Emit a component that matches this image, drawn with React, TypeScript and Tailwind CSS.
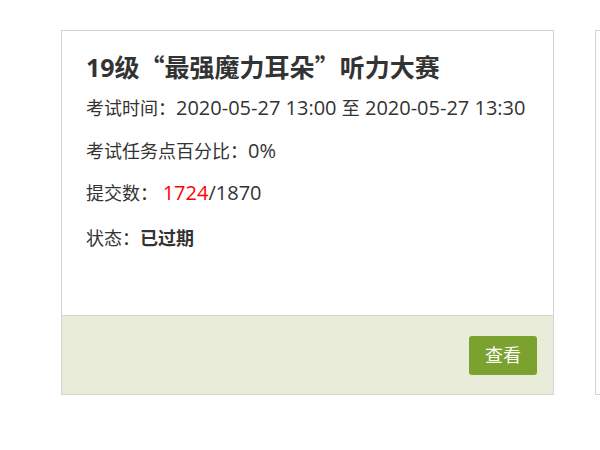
import React from "react";

export default function App() {
  const font = { fontFamily: '"Open Sans", "Noto Sans CJK SC", sans-serif' };
  const cjk = { fontFamily: '"Noto Sans CJK SC", sans-serif' };
  const L = "text-[20px]";
  return (
    <div className="w-[600px] h-[450px] bg-white overflow-hidden relative" style={font}>
      <div className="flex gap-[41px] pt-[30px] pl-[61px]">
        <div className="w-[493px] h-[365px] shrink-0 border border-[#d4d4d4] flex flex-col bg-white">
          <div className="flex-1 pl-[24px] pt-[19px] text-[#333]">
            <div className="text-[25px] font-bold leading-[32px] text-[#333] whitespace-nowrap">
              19级<span style={cjk}>“</span>最强魔力耳朵<span style={cjk}>”</span>听力大赛
            </div>
            <div className="text-[18px] leading-[24px] mt-[13px] whitespace-pre">
              考试时间：<span className={L}>2020-05-27 13:00 </span>至<span className={L}> 2020-05-27 13:30</span>
            </div>
            <div className="text-[18px] leading-[24px] mt-[19px]">
              考试任务点百分比：<span className={L}>0%</span>
            </div>
            <div className="text-[18px] leading-[24px] mt-[18px] whitespace-pre">
              提交数：<span> </span>
              <span className={`${L} text-[#ff0000]`}>1724</span>
              <span className={L}>/1870</span>
            </div>
            <div className="text-[18px] leading-[24px] mt-[21px]">
              状态：<span className="font-bold">已过期</span>
            </div>
          </div>
          <div className="h-[79px] border-t border-[#d4d4d4] bg-[#e8ecd9] flex items-center justify-end pr-[16px]">
            <button className="w-[68px] h-[39px] rounded-[3px] bg-[#7ba22e] text-white text-[18px] leading-none">查看</button>
          </div>
        </div>
        <div className="w-[300px] h-[365px] shrink-0 border border-[#d4d4d4]" />
      </div>
    </div>
  );
}
